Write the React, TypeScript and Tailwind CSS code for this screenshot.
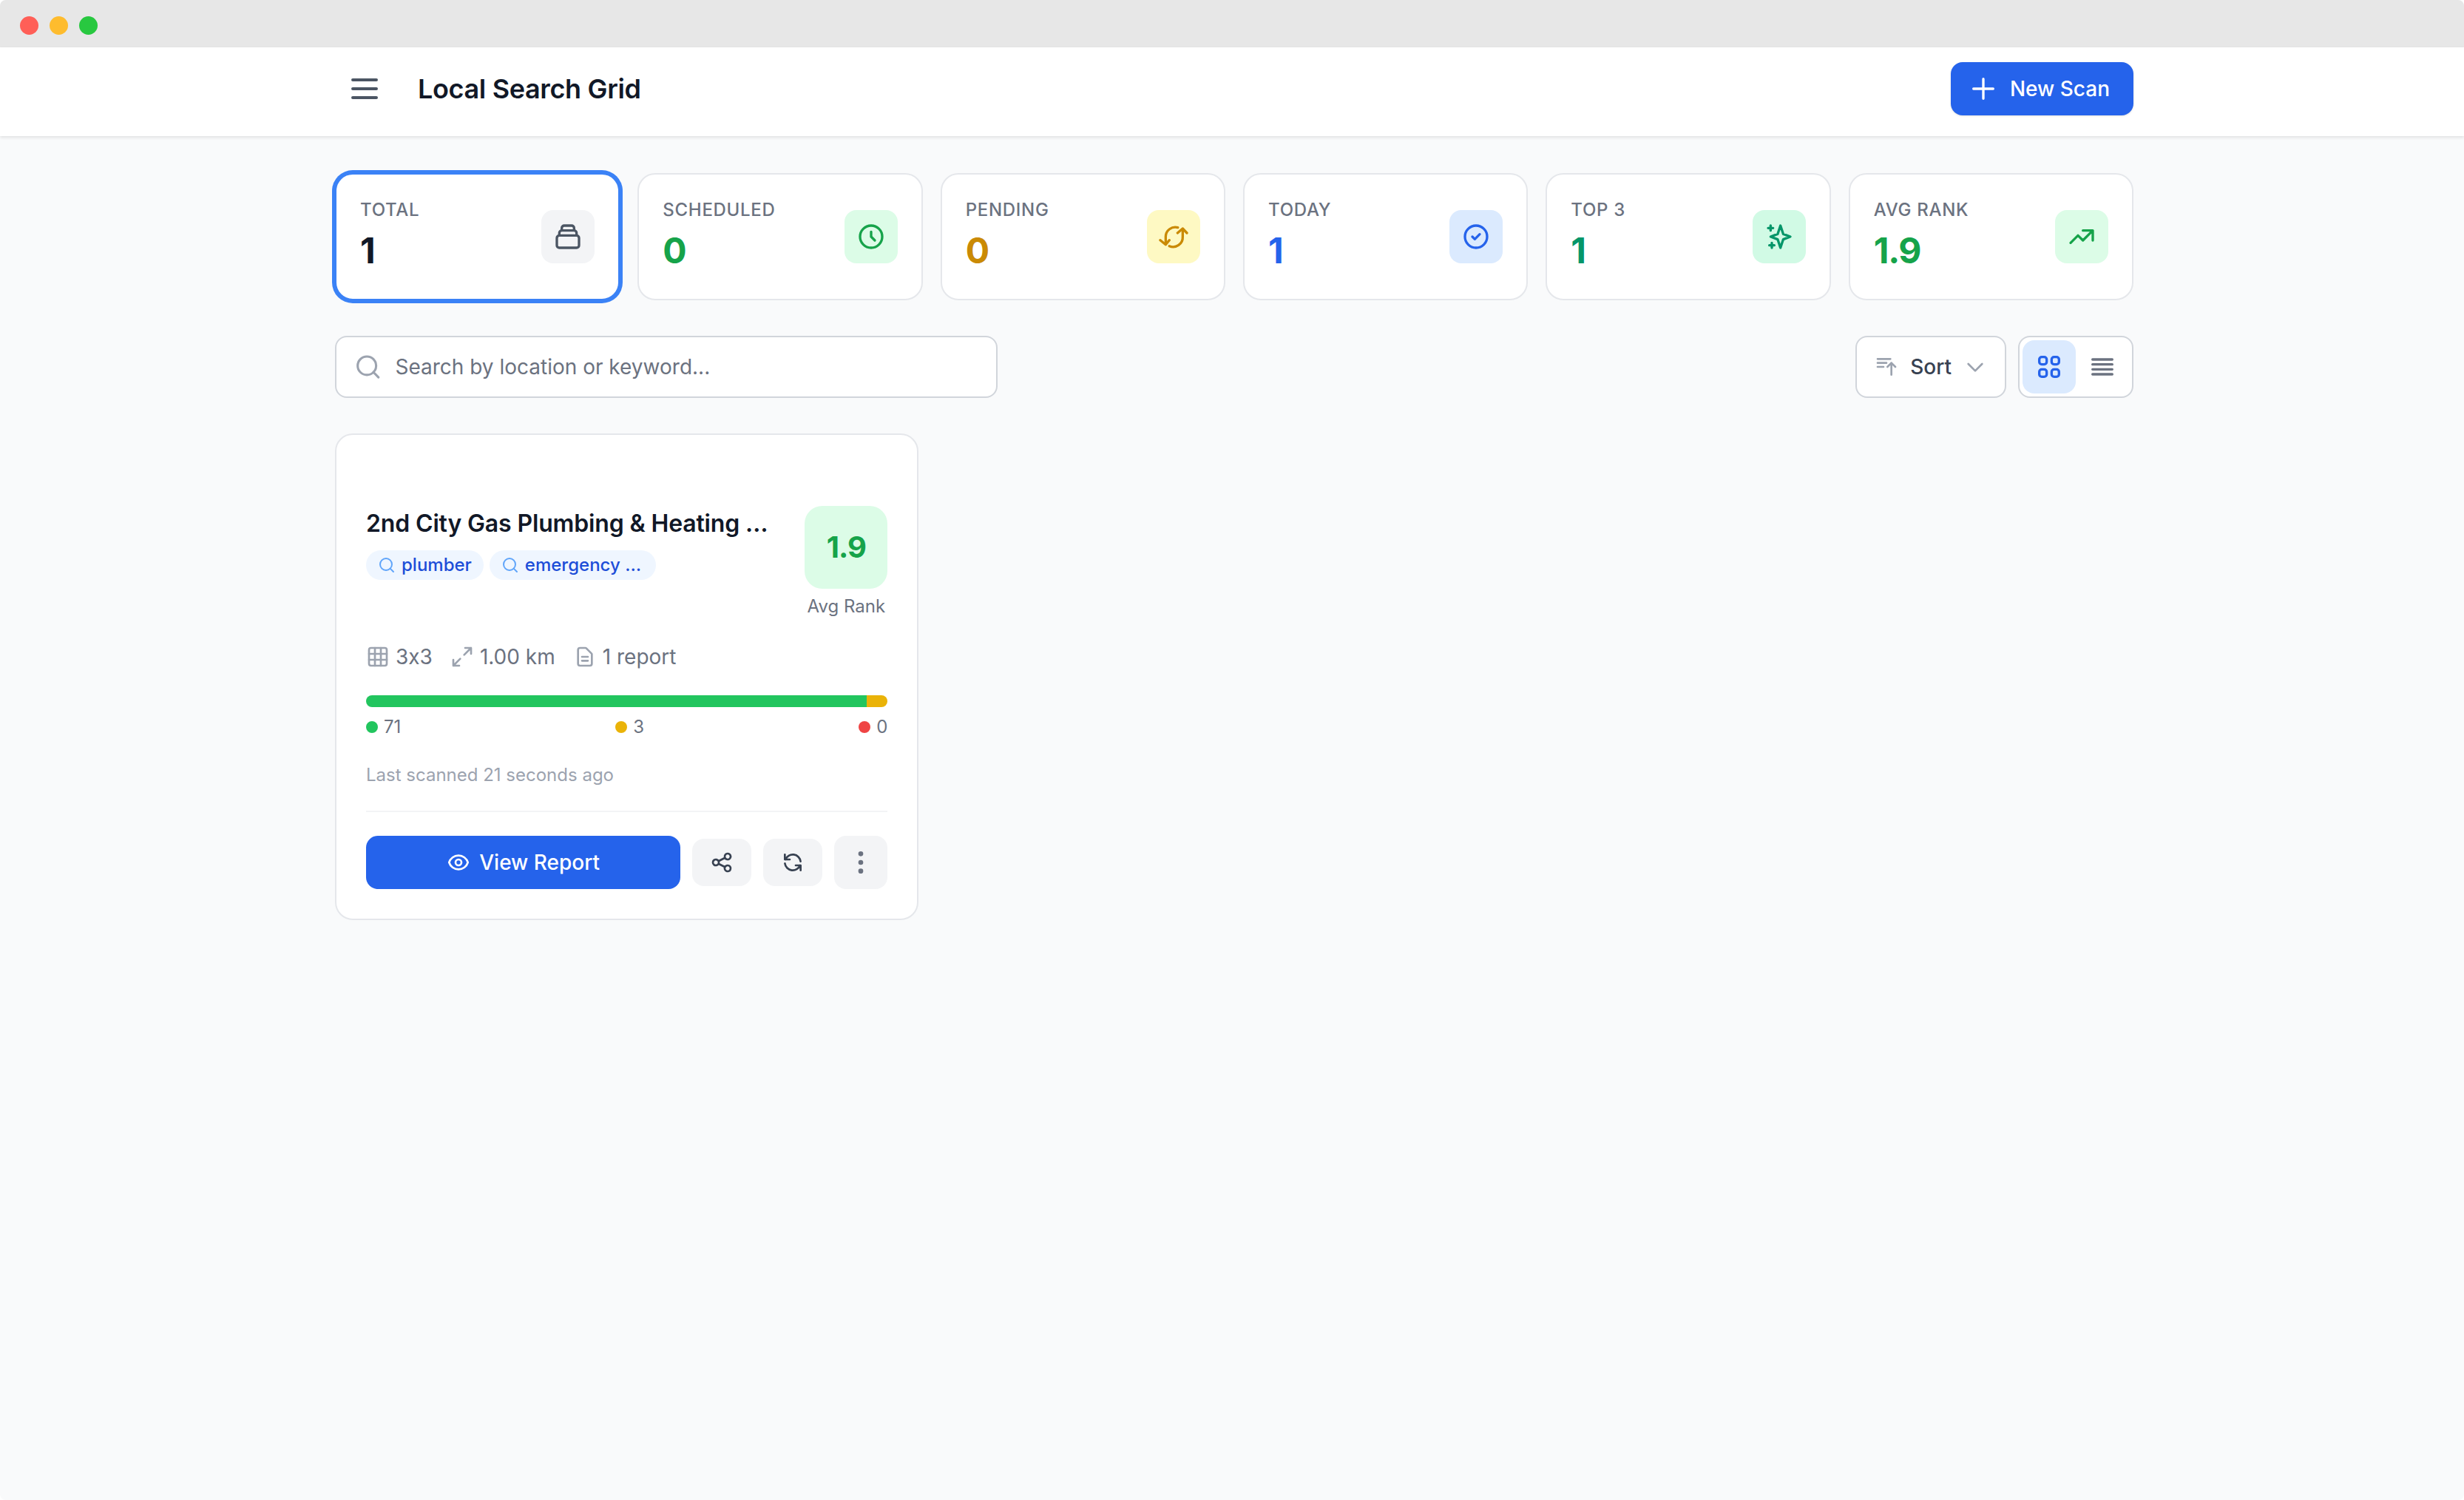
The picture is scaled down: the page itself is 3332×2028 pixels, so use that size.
import type { ReactNode } from "react"
import { Grid3x3, Search } from "lucide-react"
import {
  HiOutlineChevronDown,
  HiOutlineClock,
  HiOutlineCheckCircle,
  HiOutlineCollection,
  HiOutlineDocumentText,
  HiOutlineDotsVertical,
  HiOutlineEye,
  HiOutlineMenu,
  HiOutlinePlus,
  HiOutlineRefresh,
  HiOutlineShare,
  HiOutlineSortAscending,
  HiOutlineSparkles,
  HiOutlineTrendingUp,
  HiOutlineViewGrid,
} from "react-icons/hi"

function PendingIcon({ className }: { className?: string }) {
  return (
    <svg viewBox="0 0 24 24" fill="none" stroke="currentColor" strokeWidth="2" strokeLinecap="round" strokeLinejoin="round" className={className}>
      <path d="M15.5 4.6A7.8 7.8 0 0 0 5.6 12v6" />
      <path d="M1.2 14.8l4.4 3.6 3-3.6" />
      <path d="M8.5 19.6A7.8 7.8 0 0 0 19.4 12V5.6" />
      <path d="M15.2 9l4.2-3.6 3.4 3.6" />
    </svg>
  )
}

function ExpandIcon({ className }: { className?: string }) {
  return (
    <svg viewBox="0 0 24 24" fill="none" stroke="currentColor" strokeWidth="2" strokeLinecap="round" strokeLinejoin="round" className={className}>
      <path d="M14 10l7-7M15 3h6v6" />
      <path d="M10 14l-7 7M9 21H3v-6" />
    </svg>
  )
}

function ListIcon({ className }: { className?: string }) {
  return (
    <svg viewBox="0 0 24 24" fill="none" stroke="currentColor" strokeWidth="2" strokeLinecap="round" className={className}>
      <path d="M4 6h16M4 10h16M4 14h16M4 18h16" />
    </svg>
  )
}

function StatCard({
  label,
  value,
  valueClass,
  boxClass,
  active,
  children,
}: {
  label: string
  value: string
  valueClass: string
  boxClass: string
  active?: boolean
  children: ReactNode
}) {
  return (
    <div
      className={
        active
          ? "flex items-center justify-between rounded-3xl border-2 border-[#3b82f6] bg-white p-8 ring-4 ring-[#3b82f6]"
          : "flex items-center justify-between rounded-3xl border-2 border-[#e5e7eb] bg-white p-8"
      }
    >
      <div>
        <div className="text-[24px] leading-8 font-medium tracking-[0.7px] text-[#6b7280] uppercase">{label}</div>
        <div className={"mt-[7px] mb-px text-[48px] leading-16 font-bold tracking-tight " + valueClass}>{value}</div>
      </div>
      <div className={"flex h-[72px] w-[72px] items-center justify-center rounded-2xl " + boxClass}>{children}</div>
    </div>
  )
}

function Tag({ children }: { children: ReactNode }) {
  return (
    <span className="flex h-10 items-center gap-2 rounded-full bg-[#eff6ff] px-4 text-[24px] leading-8 font-medium text-[#1d4ed8]">
      <Search className="h-6 w-6 text-[#60a5fa]" />
      {children}
    </span>
  )
}

export default function App() {
  return (
    <div className="h-[2028px] overflow-hidden rounded-lg bg-[#f9fafb] font-[Inter,sans-serif]">
      {/* Window chrome */}
      <div className="flex h-16 gap-[15px] bg-[#e7e7e7] pt-[22px] pl-[27px]">
        <span className="h-[25px] w-[25px] rounded-full bg-[#ff5f57]" />
        <span className="h-[25px] w-[25px] rounded-full bg-[#febc2e]" />
        <span className="h-[25px] w-[25px] rounded-full bg-[#28c840]" />
      </div>

      <header className="h-[120px] bg-white pt-5 shadow-[0_2px_4px_rgba(0,0,0,0.1)]">
        <div className="ml-[453px] flex h-[72px] w-[2432px] items-center justify-between">
          <div className="flex items-center gap-8">
            <div className="px-4">
              <HiOutlineMenu className="h-12 w-12 text-[#4b5563]" />
            </div>
            <h1 className="text-[36px] leading-[72px] font-semibold tracking-[-0.35px] text-[#111827]">Local Search Grid</h1>
          </div>
          <button className="flex h-[72px] items-center gap-4 rounded-2xl bg-[#2563eb] pr-8 pl-6 text-[28px] font-medium text-white shadow-sm">
            <HiOutlinePlus className="h-10 w-10" />
            New Scan
          </button>
        </div>
      </header>

      <main className="ml-[453px] w-[2432px] pt-[50px]">
        <div className="grid grid-cols-6 gap-6">
          <StatCard label="Total" value="1" valueClass="text-[#111827]" boxClass="bg-[#f3f4f6] text-[#4b5563]" active>
            <HiOutlineCollection className="h-10 w-10" />
          </StatCard>
          <StatCard label="Scheduled" value="0" valueClass="text-[#16a34a]" boxClass="bg-[#dcfce7] text-[#16a34a]">
            <HiOutlineClock className="h-10 w-10" />
          </StatCard>
          <StatCard label="Pending" value="0" valueClass="text-[#ca8a04]" boxClass="bg-[#fef9c3] text-[#ca8a04]">
            <PendingIcon className="h-10 w-10" />
          </StatCard>
          <StatCard label="Today" value="1" valueClass="text-[#2563eb]" boxClass="bg-[#dbeafe] text-[#2563eb]">
            <HiOutlineCheckCircle className="h-10 w-10" />
          </StatCard>
          <StatCard label="Top 3" value="1" valueClass="text-[#059669]" boxClass="bg-[#d1fae5] text-[#059669]">
            <HiOutlineSparkles className="h-10 w-10" />
          </StatCard>
          <StatCard label="Avg Rank" value="1.9" valueClass="text-[#16a34a]" boxClass="bg-[#dcfce7] text-[#16a34a]">
            <HiOutlineTrendingUp className="h-10 w-10" />
          </StatCard>
        </div>

        {/* Toolbar */}
        <div className="mt-12 flex items-center justify-between">
          <label className="flex h-[84px] w-[896px] items-center gap-[18px] rounded-2xl border-2 border-[#d1d5db] bg-white pl-6">
            <Search className="h-10 w-10 text-[#9ca3af]" />
            <input
              placeholder="Search by location or keyword..."
              className="w-full bg-transparent text-[28px] outline-none placeholder:text-[#6b7280]"
            />
          </label>
          <div className="flex items-center gap-4">
            <button className="flex h-[84px] items-center gap-4 rounded-2xl border-2 border-[#d1d5db] bg-white px-6 text-[28px] font-medium text-[#374151]">
              <HiOutlineSortAscending className="h-8 w-8 text-[#9ca3af]" />
              Sort
              <HiOutlineChevronDown className="h-8 w-8 text-[#9ca3af]" />
            </button>
            <div className="flex h-[84px] items-center rounded-2xl border-2 border-[#d1d5db] bg-white p-1">
              <div className="flex h-[72px] w-[72px] items-center justify-center rounded-2xl bg-[#dbeafe] text-[#2563eb]">
                <HiOutlineViewGrid className="h-10 w-10" />
              </div>
              <div className="flex h-[72px] w-[72px] items-center justify-center text-[#6b7280]">
                <ListIcon className="h-10 w-10" />
              </div>
            </div>
          </div>
        </div>

        {/* Scan cards */}
        <div className="mt-12 grid grid-cols-3 gap-8">
          <div className="rounded-3xl border-2 border-[#e5e7eb] bg-white p-10 pt-24">
            <div className="flex justify-between">
              <div>
                <h2 className="w-[543px] text-[32px] leading-12 font-semibold tracking-[-0.15px] whitespace-nowrap text-[#111827]">
                  2nd City Gas Plumbing &amp; Heating …
                </h2>
                <div className="mt-3 flex gap-2">
                  <Tag>plumber</Tag>
                  <Tag>
                    <span className="w-[161px]">emergency …</span>
                  </Tag>
                </div>
              </div>
              <div className="flex flex-col items-center">
                <div className="flex h-28 w-28 items-center justify-center rounded-3xl bg-[#dcfce7] text-[40px] font-bold tracking-tight text-[#16a34a]">
                  1.9
                </div>
                <div className="mt-2 text-[24px] leading-8 text-[#6b7280]">Avg Rank</div>
              </div>
            </div>

            <div className="mt-8 flex h-10 items-center gap-6 text-[28px] text-[#6b7280] [font-feature-settings:'calt'_0]">
              <span className="flex items-center gap-2">
                <Grid3x3 className="h-8 w-8 text-[#9ca3af]" />
                3x3
              </span>
              <span className="flex items-center gap-2">
                <ExpandIcon className="h-8 w-8 text-[#9ca3af]" />
                1.00 km
              </span>
              <span className="flex items-center gap-2">
                <HiOutlineDocumentText className="h-8 w-8 text-[#9ca3af]" />
                1 report
              </span>
            </div>

            <div className="mt-8 flex h-4 overflow-hidden rounded-full">
              <div className="w-[96%] bg-[#22c55e]" />
              <div className="w-[4%] bg-[#eab308]" />
            </div>
            <div className="mt-[11px] flex justify-between text-[24px] leading-8 text-[#6b7280]">
              <span className="flex items-center gap-2">
                <i className="h-4 w-4 rounded-full bg-[#22c55e]" />
                71
              </span>
              <span className="flex items-center gap-2">
                <i className="h-4 w-4 rounded-full bg-[#eab308]" />
                3
              </span>
              <span className="flex items-center gap-2">
                <i className="h-4 w-4 rounded-full bg-[#ef4444]" />
                0
              </span>
            </div>

            <div className="mt-[33px] text-[24px] leading-8 text-[#9ca3af]">Last scanned 21 seconds ago</div>

            <div className="mt-8 flex items-center gap-4 border-t-2 border-[#f3f4f6] pt-8">
              <button className="flex h-[72px] flex-1 items-center justify-center gap-3 rounded-2xl bg-[#2563eb] text-[28px] font-medium text-white">
                <HiOutlineEye className="h-8 w-8" />
                View Report
              </button>
              <button className="rounded-2xl bg-[#f3f4f6] px-6 py-4 text-[#374151]">
                <HiOutlineShare className="h-8 w-8" />
              </button>
              <button className="rounded-2xl bg-[#f3f4f6] px-6 py-4 text-[#374151]">
                <HiOutlineRefresh className="h-8 w-8" />
              </button>
              <button className="rounded-2xl bg-[#f3f4f6] p-4 text-[#6b7280]">
                <HiOutlineDotsVertical className="h-10 w-10" />
              </button>
            </div>
          </div>
        </div>
      </main>
    </div>
  )
}
